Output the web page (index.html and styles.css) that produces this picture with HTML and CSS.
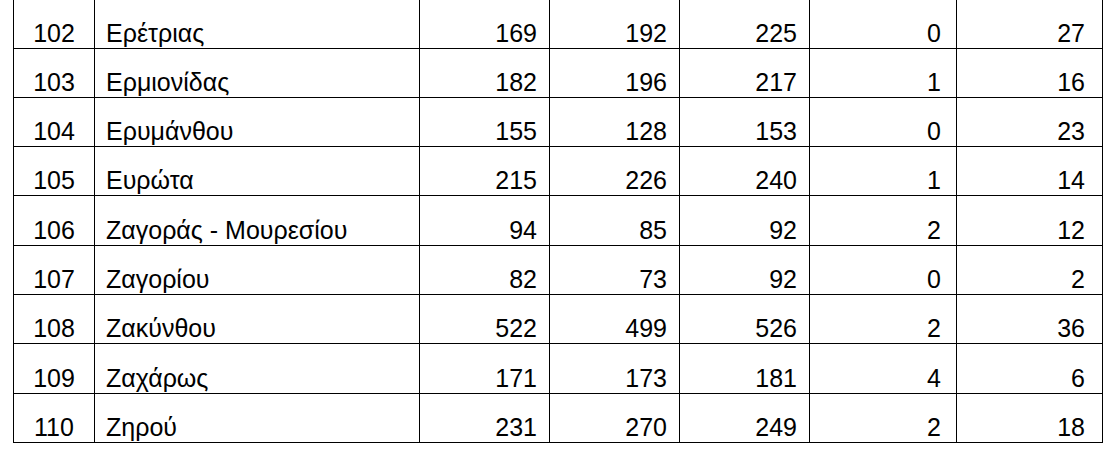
FILE: index.html
```html
<!DOCTYPE html>
<html lang="el">
<head>
<meta charset="utf-8">
<link rel="stylesheet" href="styles.css">
</head>
<body>
<table class="data">
  <colgroup>
    <col class="c-id"><col class="c-name"><col class="c-n"><col class="c-n"><col class="c-n"><col class="c-n5"><col class="c-n6">
  </colgroup>
  <tbody>
    <tr><td class="id">102</td><td class="name">Ερέτριας</td><td class="num">169</td><td class="num">192</td><td class="num">225</td><td class="num n5">0</td><td class="num n6">27</td></tr>
    <tr><td class="id">103</td><td class="name">Ερμιονίδας</td><td class="num">182</td><td class="num">196</td><td class="num">217</td><td class="num n5">1</td><td class="num n6">16</td></tr>
    <tr><td class="id">104</td><td class="name">Ερυμάνθου</td><td class="num">155</td><td class="num">128</td><td class="num">153</td><td class="num n5">0</td><td class="num n6">23</td></tr>
    <tr><td class="id">105</td><td class="name">Ευρώτα</td><td class="num">215</td><td class="num">226</td><td class="num">240</td><td class="num n5">1</td><td class="num n6">14</td></tr>
    <tr class="tall"><td class="id">106</td><td class="name">Ζαγοράς - Μουρεσίου</td><td class="num">94</td><td class="num">85</td><td class="num">92</td><td class="num n5">2</td><td class="num n6">12</td></tr>
    <tr><td class="id">107</td><td class="name">Ζαγορίου</td><td class="num">82</td><td class="num">73</td><td class="num">92</td><td class="num n5">0</td><td class="num n6">2</td></tr>
    <tr><td class="id">108</td><td class="name">Ζακύνθου</td><td class="num">522</td><td class="num">499</td><td class="num">526</td><td class="num n5">2</td><td class="num n6">36</td></tr>
    <tr class="tall"><td class="id">109</td><td class="name">Ζαχάρως</td><td class="num">171</td><td class="num">173</td><td class="num">181</td><td class="num n5">4</td><td class="num n6">6</td></tr>
    <tr><td class="id">110</td><td class="name">Ζηρού</td><td class="num">231</td><td class="num">270</td><td class="num">249</td><td class="num n5">2</td><td class="num n6">18</td></tr>
  </tbody>
</table>
</body>
</html>
```

FILE: styles.css
```css
html, body {
  margin: 0;
  padding: 0;
  background: #ffffff;
}

body {
  font-family: "Liberation Sans", Arial, sans-serif;
  color: #000000;
}

.data {
  border-collapse: collapse;
  table-layout: fixed;
  width: 1089px;
  margin: -1px 0 0 13px;
  font-size: 25px;
  line-height: 25px;
}

.c-id { width: 81px; }
.c-name { width: 325px; }
.c-n { width: 130px; }
.c-n5 { width: 147px; }
.c-n6 { width: 146px; }

.data td {
  border: 1px solid #000000;
  height: 49px;
  box-sizing: border-box;
  padding: 0 12px 2px 12px;
  vertical-align: bottom;
  white-space: nowrap;
}

.data tr.tall td {
  height: 50px;
}

.data td.id {
  text-align: center;
  padding-left: 0;
  padding-right: 0;
}

.data td.name {
  text-align: left;
  padding-left: 11px;
}

.data td.num {
  text-align: right;
}

.data td.n5 {
  padding-right: 15px;
}

.data td.n6 {
  padding-right: 17px;
}
```
